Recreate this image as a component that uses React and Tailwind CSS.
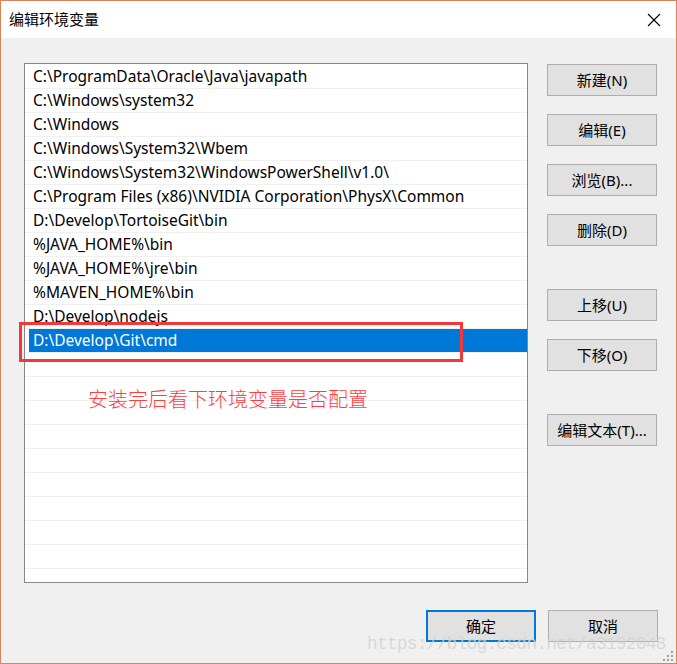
import React from "react";

const paths = [
    "C:\\ProgramData\\Oracle\\Java\\javapath",
    "C:\\Windows\\system32",
    "C:\\Windows",
    "C:\\Windows\\System32\\Wbem",
    "C:\\Windows\\System32\\WindowsPowerShell\\v1.0\\",
    "C:\\Program Files (x86)\\NVIDIA Corporation\\PhysX\\Common",
    "D:\\Develop\\TortoiseGit\\bin",
    "%JAVA_HOME%\\bin",
    "%JAVA_HOME%\\jre\\bin",
    "%MAVEN_HOME%\\bin",
    "D:\\Develop\\nodejs",
    "D:\\Develop\\Git\\cmd",
];

const SELECTED = 11;

function Button({ children, primary, className = "" }) {
    return (
        <button
            className={
                "w-[110px] h-[32px] bg-[#e1e1e1] text-[15px] text-black flex items-center justify-center " +
                (primary ? "border-2 border-[#0078d7] " : "border border-[#adadad] ") +
                className
            }
        >
            {children}
        </button>
    );
}

function App() {
    const rows = [...paths, ...Array(10).fill("")];

    return (
        <div
            className="relative w-[677px] h-[664px] overflow-hidden border border-[#d9825b] bg-[#f0f0f0] flex flex-col"
            style={{ fontFamily: '"Noto Sans", "Noto Sans CJK SC", sans-serif' }}
        >
            {/* title bar */}
            <div className="h-[37px] shrink-0 bg-white flex items-center justify-between pl-[8px] pr-[14px]">
                <span className="text-[15px] text-black">编辑环境变量</span>
                <svg width="14" height="14" viewBox="0 0 14 14" className="mr-[1px]">
                    <path d="M1 1 L13 13 M13 1 L1 13" stroke="#000" strokeWidth="1.1" fill="none" />
                </svg>
            </div>

            <div className="flex pl-[23px] pt-[25px] gap-[19px]">
                {/* path list */}
                <div className="w-[504px] h-[520px] border border-[#828790] bg-white pt-[1px] overflow-hidden">
                    {rows.map((p, i) => (
                        <div key={i} className="h-[24px] border-b border-[#f0f0f0]">
                            <div
                                className={
                                    "ml-[4px] h-[23px] pl-[4px] pt-[1px] flex items-center text-[15.5px] whitespace-nowrap " +
                                    (i === SELECTED ? "bg-[#0078d7] text-white" : "text-black")
                                }
                            >
                                {p}
                            </div>
                        </div>
                    ))}
                </div>

                {/* side buttons */}
                <div className="flex flex-col pt-[1px]">
                    <Button>新建(N)</Button>
                    <Button className="mt-[18px]">编辑(E)</Button>
                    <Button className="mt-[18px]">浏览(B)...</Button>
                    <Button className="mt-[18px]">删除(D)</Button>
                    <Button className="mt-[43px]">上移(U)</Button>
                    <Button className="mt-[18px]">下移(O)</Button>
                    <Button className="mt-[43px]">编辑文本(T)...</Button>
                </div>
            </div>

            {/* bottom buttons */}
            <div className="flex justify-end gap-[12px] pr-[18px] pt-[27px]">
                <Button primary>确定</Button>
                <Button>取消</Button>
            </div>

            {/* annotation */}
            <div className="absolute left-[18px] top-[321px] w-[444px] h-[40px] border-[3px] border-[#f43838]" />
            <div
                className="absolute left-[87px] top-[384px] text-[20px] font-light leading-[28px] text-[#ff3d3d]"
                style={{ fontFamily: '"Noto Sans CJK SC", sans-serif' }}
            >
                安装完后看下环境变量是否配置
            </div>

            {/* watermark */}
            <div
                className="absolute left-[366px] top-[632px] text-[18px] leading-[22px] tracking-[-0.85px] text-[#d2d2d2]/80 whitespace-nowrap"
                style={{ fontFamily: '"Liberation Mono", monospace' }}
            >
                https://blog.csdn.net/a3192048
            </div>

            {/* resize grip */}
            <svg className="absolute right-[2px] bottom-[1px]" width="11" height="11" viewBox="0 0 11 11">
                <g fill="#a0a0a0">
                    <rect x="8" y="0" width="2" height="2" />
                    <rect x="4" y="4" width="2" height="2" />
                    <rect x="8" y="4" width="2" height="2" />
                    <rect x="0" y="8" width="2" height="2" />
                    <rect x="4" y="8" width="2" height="2" />
                    <rect x="8" y="8" width="2" height="2" />
                </g>
            </svg>
        </div>
    );
}

export default App;
